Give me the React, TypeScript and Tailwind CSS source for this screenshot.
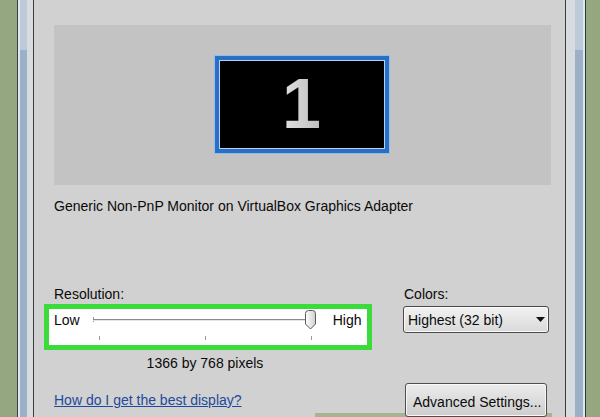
import React from "react";

function Thumb() {
  return (
    <svg width="13" height="20" viewBox="0 0 13 20" className="absolute left-[211px] top-[1px]">
      <defs>
        <linearGradient id="thumbFill" x1="0" y1="0" x2="1" y2="0">
          <stop offset="0" stopColor="#ffffff" />
          <stop offset="1" stopColor="#cfcfcf" />
        </linearGradient>
      </defs>
      <path
        d="M1.5 3.5 Q1.5 0.5 4.5 0.5 H8.5 Q11.5 0.5 11.5 3.5 V14 L6.5 19 L1.5 14 Z"
        fill="url(#thumbFill)"
        stroke="#5a5a5a"
        strokeWidth="1"
      />
    </svg>
  );
}

export default function App() {
  return (
    <div className="flex h-[417px] w-[600px] overflow-hidden bg-[#95a780] font-['Liberation_Sans',Arial,sans-serif] text-[14px] leading-[16px] text-[#0a0a0a]">
      <div className="w-[17px] shrink-0" />

      {/* left window frame */}
      <div className="flex shrink-0">
        <div className="w-px bg-[#3a4046]" />
        <div className="w-[2px] bg-[#dfe6ee]" />
        <div className="flex w-[7px] flex-col">
          <div className="h-[50px] bg-[#bccad9]" />
          <div className="flex-1 bg-[#9cb1c7]" />
        </div>
        <div className="w-[6px] bg-[#d9dcdf]" />
        <div className="w-px bg-[#3c3c3c]" />
      </div>

      <main className="relative flex w-[531px] shrink-0 flex-col bg-[#d1d1d1] pl-5 pt-[25px]">
        {/* monitor preview */}
        <div className="flex h-[167px] w-[497px] items-center justify-center bg-[#c3c3c3]">
          <div className="-translate-x-[1px] -translate-y-[1px] h-[99px] w-[176px] border border-[#8ec0ee] bg-[#2c6ec3] p-[4px]">
            <div className="flex h-full w-full items-center justify-center border border-[#a9d4fb] bg-black">
              <span className="bg-gradient-to-r from-[#e2e2e2] to-[#bdbdbd] bg-clip-text text-[70px] font-bold leading-none text-transparent">
                1
              </span>
            </div>
          </div>
        </div>

        <p className="mt-[13px]">Generic Non-PnP Monitor on VirtualBox Graphics Adapter</p>

        <div className="-ml-[10px] mt-[72px] flex">
          {/* resolution */}
          <div className="w-[328px]">
            <p className="pl-[10px]">Resolution:</p>
            <div className="mt-[2px] h-[46px] border-[5px] border-[#3cdb3c] bg-white">
              <div className="flex h-full">
                <span className="pl-[5px] pt-[3px]">Low</span>
                <div className="relative ml-[13px] h-full w-[224px]">
                  <div className="absolute left-0 top-[8px] h-[5px] w-px bg-[#9a9a9a]" />
                  <div className="absolute left-0 top-[10px] h-[2px] w-[218px] border-t border-b border-t-[#8a8a8a] border-b-[#e4e4e4]" />
                  <div className="absolute left-[6px] top-[27px] h-[4px] w-px bg-[#9a9a9a]" />
                  <div className="absolute left-[112px] top-[27px] h-[4px] w-px bg-[#9a9a9a]" />
                  <div className="absolute left-[218px] top-[27px] h-[4px] w-px bg-[#9a9a9a]" />
                  <Thumb />
                </div>
                <span className="ml-[16px] pt-[3px]">High</span>
              </div>
            </div>
            <p className="ml-[49px] mt-[5px] w-[224px] text-center">1366 by 768 pixels</p>
            <a className="mt-[21px] block pl-[10px] text-[#1d4a9c] underline underline-offset-[1px]">
              How do I get the best display?
            </a>
          </div>

          {/* colors */}
          <div className="ml-[31px] w-[146px]">
            <p className="pl-[1px]">Colors:</p>
            <div className="mt-[4px] flex h-[27px] items-center justify-between rounded-[3px] border border-[#4a4a4a] bg-gradient-to-b from-[#f2f2f2] to-[#d9d9d9] pl-[4px] pr-[3px] shadow-[inset_0_0_0_1px_#fafafa]">
              <span>Highest (32 bit)</span>
              <svg width="9" height="5" viewBox="0 0 9 5">
                <path d="M0 0 H9 L4.5 5 Z" fill="#111" />
              </svg>
            </div>
            <button className="relative z-10 ml-[2px] mt-[50px] h-[34px] w-[142px] rounded-[3px] border border-[#4e4e4e] bg-gradient-to-b from-[#ececec] to-[#cdcdcd] pl-[7px] pt-[4px] text-left align-top shadow-[inset_0_0_0_1px_#f8f8f8]">
              <span className="block leading-[16px]">Advanced Settings...</span>
            </button>
          </div>
        </div>

        <div className="absolute bottom-0 left-[281px] h-[4px] w-[237px] bg-[#a3b591]" />
      </main>

      {/* right window frame */}
      <div className="flex shrink-0">
        <div className="w-px bg-[#3c3c3c]" />
        <div className="w-[9px] bg-[#d9dcdf]" />
        <div className="flex w-[8px] flex-col">
          <div className="h-[50px] bg-[#bccad9]" />
          <div className="flex-1 bg-[#9cb1c7]" />
        </div>
        <div className="w-[2px] bg-[#dfe6ee]" />
        <div className="w-px bg-[#2a3a36]" />
      </div>
    </div>
  );
}
